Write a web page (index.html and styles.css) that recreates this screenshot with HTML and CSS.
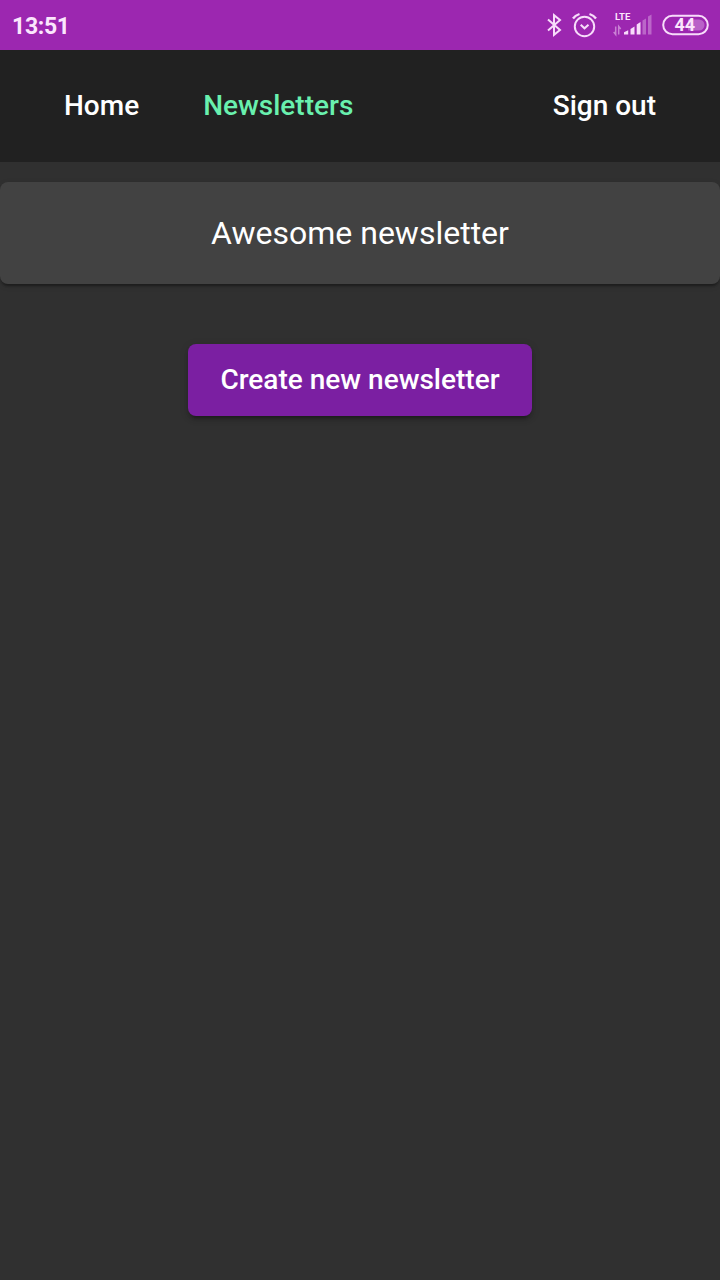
FILE: index.html
```html
<!DOCTYPE html>
<html lang="en">
<head>
<meta charset="utf-8">
<title>Newsletters</title>
<link rel="stylesheet" href="styles.css">
</head>
<body>
<div class="status-bar">
  <span class="clock">13:51</span>
  <svg class="status-icons" width="176" height="50" viewBox="544 0 176 50" fill="none" stroke="#f7dcfa" stroke-width="2">
    <path d="M548 19.500 560 30 554 34.800V15.200L560 20 548 30.500"/>
    <circle cx="584.500" cy="26.500" r="9.700"/>
    <path d="M573 18.500Q575 15.500 579.500 14M589.500 14Q594 15.500 596 18.500" stroke-width="2.300"/>
    <path d="M580.700 24.700 584.500 28.300 588.500 24.700"/>
    <text class="lte" x="615" y="20">LTE</text>
    <g stroke="none" fill="#f7dcfa">
      <path d="M624 34.500V32.200l4.200-2v4.300zM630.500 34.500V29l4-2.500v8zM636.700 34.500V24.500l3.800-2.500v12.500z"/>
      <path d="M642.500 34.500V20.500l3.500-2v16zM648 34.500V16.500l3.500-2v20z" opacity=".35"/>
    </g>
    <path d="M615.700 26.500V34.500l-2-2.500M618.700 34.500V26.500l2 2.500" stroke-width="1.500" opacity=".5"/>
    <path d="M688 19.500h11a5.500 5.500 0 0 1 0 11h-11z" fill="#c983d5" stroke="none" opacity=".65"/>
    <rect x="663.200" y="15.800" width="44.600" height="18.400" rx="9.200"/>
    <text class="battery" x="674.500" y="31">44</text>
  </svg>
</div>
<nav class="toolbar">
  <a class="link">Home</a>
  <a class="link active">Newsletters</a>
  <a class="link sign-out">Sign out</a>
</nav>
<main class="content">
  <section class="card">Awesome newsletter</section>
  <button class="create">Create new newsletter</button>
</main>
</body>
</html>
```
FILE: styles.css
```css
body {
  margin: 0;
  min-height: 1280px;
  background: #303030;
  color: #fff;
  font-family: Roboto, sans-serif;
}
.status-bar {
  display: flex;
  align-items: center;
  justify-content: space-between;
  height: 50px;
  padding-left: 12px;
  background: #9c27b0;
}
.clock {
  padding-top: 2px;
  color: #fbe6fd;
  font-size: 23px;
  font-weight: 700;
  letter-spacing: -.3px;
}
.status-icons {
  display: block;
}
.lte, .battery {
  fill: #fbe6fd;
  stroke: none;
  font-weight: 700;
}
.lte {
  font-size: 9.500px;
}
.battery {
  font-size: 18px;
}
.toolbar {
  display: flex;
  align-items: center;
  gap: 64px;
  box-sizing: border-box;
  height: 112px;
  padding: 0 64px 2px;
  background: #212121;
}
.link {
  font-size: 28px;
  font-weight: 500;
}
.active {
  color: #69f0ae;
}
.sign-out {
  margin-left: auto;
}
.content {
  display: flex;
  flex-direction: column;
  align-items: center;
  gap: 60px;
  padding-top: 20px;
}
.card {
  display: flex;
  align-items: center;
  justify-content: center;
  width: 100%;
  height: 102px;
  border-radius: 8px;
  background: #424242;
  box-shadow: 0 4px 2px -2px rgba(0, 0, 0, .2), 0 2px 2px rgba(0, 0, 0, .14), 0 2px 6px rgba(0, 0, 0, .12);
  font-size: 32px;
}
.create {
  height: 72px;
  padding: 0 32px 2px;
  border: 0;
  border-radius: 8px;
  background: #7b1fa2;
  box-shadow: 0 6px 2px -4px rgba(0, 0, 0, .2), 0 4px 4px rgba(0, 0, 0, .14), 0 2px 10px rgba(0, 0, 0, .12);
  color: inherit;
  font: 500 28px Roboto, sans-serif;
}
```
